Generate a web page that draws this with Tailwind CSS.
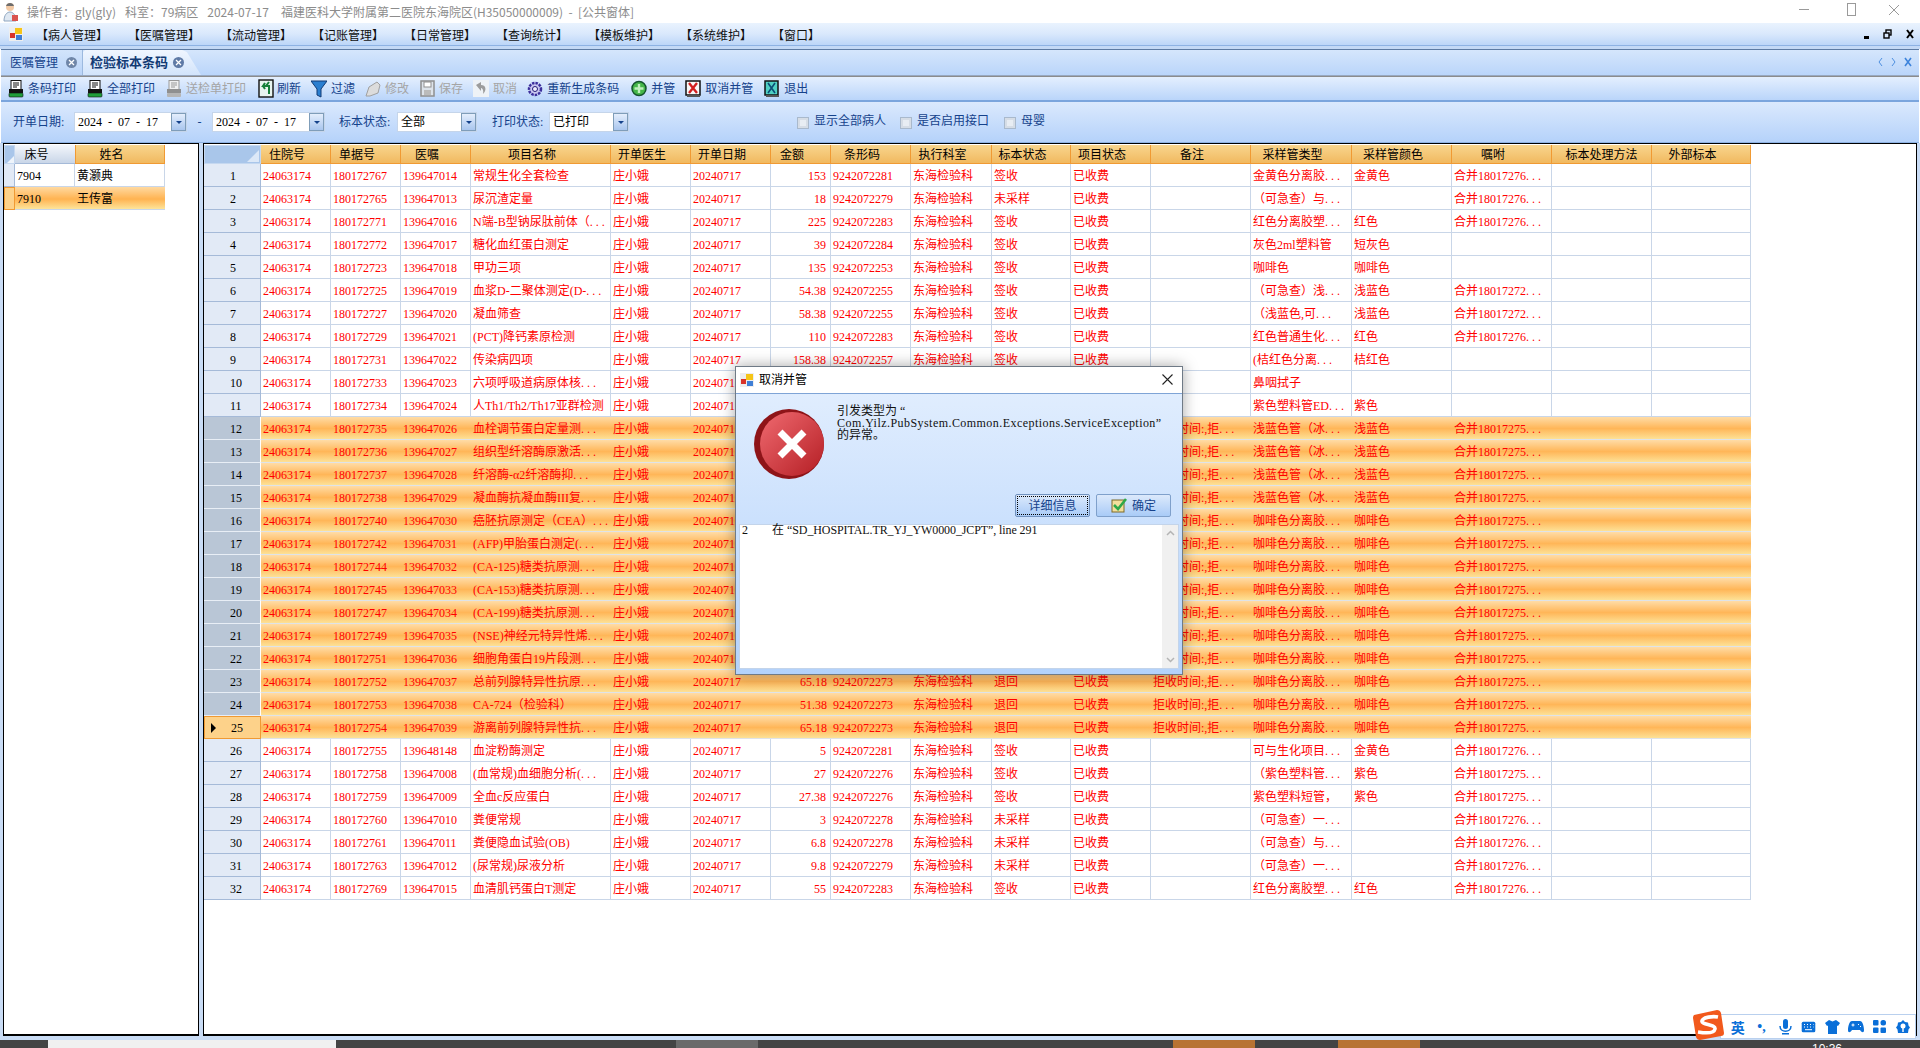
<!DOCTYPE html>
<html lang="zh-CN">
<head>
  <meta charset="UTF-8">
  <title>检验标本条码</title>
  <script src="https://cdn.jsdelivr.net/npm/@tailwindcss/browser@4"></script>
</head>
<body class="w-[1920px] h-[1048px] overflow-hidden relative bg-white text-[12px] leading-[16px] text-black font-['Liberation_Serif','Noto_Sans_CJK_SC',serif]">

  <!-- window title -->
  <div class="h-[23px] flex items-center bg-white relative">
    <svg class="w-[20px] h-[20px] ml-[1px]" viewBox="0 0 20 20"><circle cx="9" cy="5" r="4" fill="#f2c9a5"/><path d="M5 4c1-4 7-4 8 0z" fill="#6d6d6d"/><path d="M3 19c0-6 3-9 6-9s6 3 6 9z" fill="#dfe8f2" stroke="#8fa6c0"/><rect x="11" y="13" width="6" height="6" fill="#d9534f"/></svg>
    <div class="ml-[6px] flex gap-[9px] text-[12px] text-[#8c8c8c] whitespace-pre font-['Noto_Sans_CJK_SC',sans-serif]">
      <span>操作者：gly(gly)</span>
      <span>科室：79病区</span>
      <span>2024-07-17</span>
      <span class="ml-[3px]">福建医科大学附属第二医院东海院区(H35050000009)  -  [公共窗体]</span>
    </div>
    <div class="absolute right-[20px] top-[3px] flex items-center gap-[32px] text-[#9a9a9a]">
      <div class="w-[10px] h-px bg-[#9a9a9a] mr-[6px]"></div>
      <div class="w-[9px] h-[13px] border border-[#9a9a9a]"></div>
      <svg class="w-[12px] h-[12px]" viewBox="0 0 12 12" fill="none" stroke="#9a9a9a"><path d="M1 1l10 10M11 1L1 11"/></svg>
    </div>
  </div>

  <!-- menu bar -->
  <div class="h-[23px] flex items-center bg-gradient-to-b from-[#eaf3fe] via-[#d9e8fc] to-[#bcd6f8] border-b border-[#8db2e3] relative">
    <svg class="w-[14px] h-[14px] ml-[9px]" viewBox="0 0 14 14"><rect width="14" height="14" fill="#eee"/><rect x="6" y="1" width="7" height="6" fill="#f5c518"/><rect x="1" y="6" width="5" height="5" fill="#d9332a"/><rect x="7" y="8" width="6" height="5" fill="#3f7fd6"/></svg>
    <div class="flex ml-[13px] pt-[3px] gap-[32px] text-[#101010]">
      <span class="w-[60px] whitespace-nowrap">【病人管理】</span>
      <span class="w-[60px] whitespace-nowrap">【医嘱管理】</span>
      <span class="w-[60px] whitespace-nowrap">【流动管理】</span>
      <span class="w-[60px] whitespace-nowrap">【记账管理】</span>
      <span class="w-[60px] whitespace-nowrap">【日常管理】</span>
      <span class="w-[60px] whitespace-nowrap">【查询统计】</span>
      <span class="w-[60px] whitespace-nowrap">【模板维护】</span>
      <span class="w-[60px] whitespace-nowrap">【系统维护】</span>
      <span class="w-[60px] whitespace-nowrap">【窗口】</span>
    </div>
    <div class="absolute right-[6px] top-[6px] flex items-center gap-[14px]">
      <div class="w-[5px] h-[3px] bg-black mt-[7px]"></div>
      <svg class="w-[9px] h-[10px]" viewBox="0 0 9 10" fill="none" stroke="#000" stroke-width="1.4"><rect x="3" y="1" width="5" height="5"/><rect x="1" y="4" width="5" height="5" fill="#d9e8fc"/></svg>
      <svg class="w-[8px] h-[10px]" viewBox="0 0 8 10" fill="none" stroke="#000" stroke-width="2"><path d="M1 1l6 8M7 1L1 9"/></svg>
    </div>
  </div>

  <div class="h-[3px] bg-[#c3d9f6]"></div>

  <!-- tabs -->
  <div class="h-[27px] mx-[1px] relative flex items-end bg-gradient-to-b from-[#d5e6fc] to-[#bad5fa] border-t border-[#5d7ba3] border-b-[#98a8c0] border-b">
    <div class="h-[25px] w-[80px] ml-[2px] relative flex items-center pl-[7px] text-[#15428b] bg-gradient-to-b from-[#d2e4fb] to-[#bad4f8] border-r border-[#9cb9df]">
      <span class="whitespace-nowrap">医嘱管理</span>
      <span class="absolute left-[63px] top-[7px] w-[11px] h-[11px] rounded-full bg-[#6f86a8] flex items-center justify-center"><svg class="w-[7px] h-[7px]" viewBox="0 0 7 7" stroke="#fff" stroke-width="1.3"><path d="M1 1l5 5M6 1L1 6"/></svg></span>
    </div>
    <div class="h-[25px] w-[118px] relative flex items-center pl-[7px] text-[13px] text-[#123a74] font-bold bg-gradient-to-b from-[#f0f6ff] to-[#d2e4fb] [clip-path:polygon(0_100%,0_8%,2%_0,84%_0,88%_8%,100%_100%)]">
      <span class="whitespace-nowrap">检验标本条码</span>
      <span class="absolute left-[90px] top-[7px] w-[11px] h-[11px] rounded-full bg-[#5f7aa6] flex items-center justify-center"><svg class="w-[7px] h-[7px]" viewBox="0 0 7 7" stroke="#fff" stroke-width="1.3"><path d="M1 1l5 5M6 1L1 6"/></svg></span>
    </div>
    <div class="absolute right-[7px] top-[7px] flex items-center gap-[8px]">
      <svg class="w-[5px] h-[10px]" viewBox="0 0 5 10" fill="none" stroke="#4d8fe0"><path d="M4 1L1 5l3 4"/></svg>
      <svg class="w-[5px] h-[10px]" viewBox="0 0 5 10" fill="none" stroke="#4d8fe0"><path d="M1 1l3 4-3 4"/></svg>
      <svg class="w-[8px] h-[10px]" viewBox="0 0 8 10" fill="none" stroke="#3d84dc" stroke-width="1.6"><path d="M1 1l6 8M7 1L1 9"/></svg>
    </div>
  </div>

  <!-- toolbar -->
  <div class="h-[26px] mx-[1px] pl-[7px] flex items-center gap-[10px] bg-gradient-to-b from-[#e4effe] to-[#bad5fa] border-t border-[#8c8c8c] border-b-2 border-b-[#7ba5dd] text-[#15428b]">
    <div class="flex items-center gap-[4px]"><svg class="w-[16px] h-[18px]" viewBox="0 0 16 18"><rect x="3" y="0.500" width="10" height="9" fill="#fff" stroke="#111"/><path d="M5 3h6M5 5h6M5 7h4" stroke="#111"/><rect x="1" y="9" width="14" height="4" fill="#111"/><rect x="1" y="13" width="14" height="4" rx="1" fill="#1f9d3a" stroke="#111" stroke-width=".6"/></svg><span>条码打印</span></div>
    <div class="flex items-center gap-[4px] ml-px"><svg class="w-[16px] h-[18px]" viewBox="0 0 16 18"><rect x="3" y="0.500" width="10" height="9" fill="#fff" stroke="#111"/><path d="M5 3h6M5 5h6M5 7h4" stroke="#111"/><rect x="1" y="9" width="14" height="4" fill="#111"/><rect x="1" y="13" width="14" height="4" rx="1" fill="#1f9d3a" stroke="#111" stroke-width=".6"/></svg><span>全部打印</span></div>
    <div class="flex items-center gap-[4px] ml-px text-[#a5a5a5]"><svg class="w-[16px] h-[18px]" viewBox="0 0 16 18"><rect x="3" y="0.500" width="10" height="9" fill="#f0f0f0" stroke="#999"/><path d="M5 3h6M5 5h6M5 7h4" stroke="#999"/><rect x="1" y="9" width="14" height="4" fill="#8f8f8f"/><rect x="1" y="13" width="14" height="4" rx="1" fill="#b5b5b5"/></svg><span>送检单打印</span></div>
    <div class="flex items-center gap-[3px] ml-[2px]"><svg class="w-[16px] h-[20px]" viewBox="0 0 16 20"><rect x="1" y="1" width="14" height="17" fill="#e8f4f0" stroke="#111" stroke-width="1.4"/><path d="M11 15V7H8l3-4M11 7H5l2-3M5 7l2 3" fill="none" stroke="#16803a" stroke-width="2"/></svg><span>刷新</span></div>
    <div class="flex items-center gap-[4px]"><svg class="w-[16px] h-[18px]" viewBox="0 0 16 18"><path d="M0 1h16L10 9v8l-4-2V9z" fill="#2b7fd0" stroke="#123a74"/></svg><span>过滤</span></div>
    <div class="flex items-center gap-[4px] text-[#a5a5a5]"><svg class="w-[16px] h-[16px]" viewBox="0 0 16 16"><path d="M1 15l3-9 8-5 3 3-2 8-8 3z" fill="#dcdcdc" stroke="#a0a0a0"/></svg><span>修改</span></div>
    <div class="flex items-center gap-[4px] ml-px text-[#a5a5a5]"><svg class="w-[15px] h-[17px]" viewBox="0 0 15 17"><rect x="1" y="1" width="13" height="15" fill="#dde3ea" stroke="#8f8f8f" stroke-width="1.5"/><rect x="4" y="2" width="7" height="5" fill="#fff" stroke="#8f8f8f"/><rect x="4" y="10" width="7" height="5" fill="#bbb"/></svg><span>保存</span></div>
    <div class="flex items-center gap-[4px] text-[#a5a5a5]"><svg class="w-[16px] h-[17px]" viewBox="0 0 16 17"><rect width="16" height="17" fill="#eef2f6"/><path d="M3 5l5-3v3c5 0 6 5 2 9 1-4-1-6-2-6v3z" fill="#9c9c9c"/></svg><span>取消</span></div>
    <div class="flex items-center gap-[4px]"><svg class="w-[16px] h-[16px]" viewBox="0 0 16 16"><circle cx="8" cy="8" r="6" fill="#c9c7f0" stroke="#3c2f9c" stroke-width="2.5" stroke-dasharray="2.5 1"/><circle cx="8" cy="8" r="2.5" fill="#f0f0ff" stroke="#241a78"/></svg><span>重新生成条码</span></div>
    <div class="flex items-center gap-[4px] ml-[2px]"><svg class="w-[16px] h-[17px]" viewBox="0 0 16 17"><circle cx="8" cy="8.5" r="7" fill="#45b649" stroke="#14532d" stroke-width="1.5"/><path d="M8 4v9M3.5 8.5h9" stroke="#bff0bd" stroke-width="2.4"/></svg><span>并管</span></div>
    <div class="flex items-center gap-[4px]"><svg class="w-[16px] h-[17px]" viewBox="0 0 16 17"><rect x="1" y="1" width="14" height="14" fill="#f8f8f8" stroke="#111" stroke-width="1.5"/><path d="M4 3l8 10M12 3L4 13" stroke="#d21f1f" stroke-width="2.4"/><rect x="2" y="15" width="13" height="2" fill="#555"/></svg><span>取消并管</span></div>
    <div class="flex items-center gap-[4px] ml-px"><svg class="w-[16px] h-[17px]" viewBox="0 0 16 17"><rect x="1" y="1" width="13" height="14" fill="#4fd0c4" stroke="#111" stroke-width="1.5"/><path d="M4 3l7 10M11 3L4 13" stroke="#0b4e76" stroke-width="1.6"/><rect x="2" y="15" width="13" height="2" fill="#555"/></svg><span>退出</span></div>
  </div>

  <!-- filter panel -->
  <div class="h-[41px] mx-[1px] relative flex items-center pl-[12px] text-[#15428b] bg-gradient-to-b from-[#dbe9fd] to-[#b5d2fa] border-b border-[#8db2e3]">
    <span class="w-[61px] whitespace-nowrap">开单日期:</span>
    <div class="w-[113px] h-[20px] flex items-center justify-between bg-white border border-[#c5d5ea] pl-[3px] text-black whitespace-pre"><span>2024  -  07  -  17</span><span class="w-[15px] h-[18px] bg-gradient-to-b from-[#e4eefc] to-[#a9c6ee] border border-[#7f9db9] flex items-center justify-center"><span class="w-0 h-0 border-x-[3px] border-x-transparent border-t-[3px] border-t-[#15428b]"></span></span></div>
    <span class="w-[25px] text-center">-</span>
    <div class="w-[113px] h-[20px] flex items-center justify-between bg-white border border-[#c5d5ea] pl-[3px] text-black whitespace-pre"><span>2024  -  07  -  17</span><span class="w-[15px] h-[18px] bg-gradient-to-b from-[#e4eefc] to-[#a9c6ee] border border-[#7f9db9] flex items-center justify-center"><span class="w-0 h-0 border-x-[3px] border-x-transparent border-t-[3px] border-t-[#15428b]"></span></span></div>
    <span class="ml-[14px] w-[58px] whitespace-nowrap">标本状态:</span>
    <div class="w-[80px] h-[20px] flex items-center justify-between bg-white border border-[#c5d5ea] pl-[3px] text-black"><span>全部</span><span class="w-[15px] h-[18px] bg-gradient-to-b from-[#e4eefc] to-[#a9c6ee] border border-[#7f9db9] flex items-center justify-center"><span class="w-0 h-0 border-x-[3px] border-x-transparent border-t-[3px] border-t-[#15428b]"></span></span></div>
    <span class="ml-[15px] w-[57px] whitespace-nowrap">打印状态:</span>
    <div class="w-[80px] h-[20px] flex items-center justify-between bg-white border border-[#c5d5ea] pl-[3px] text-black"><span>已打印</span><span class="w-[15px] h-[18px] bg-gradient-to-b from-[#e4eefc] to-[#a9c6ee] border border-[#7f9db9] flex items-center justify-center"><span class="w-0 h-0 border-x-[3px] border-x-transparent border-t-[3px] border-t-[#15428b]"></span></span></div>
    <div class="ml-[168px] flex items-center gap-[5px] -mt-[3px]"><span class="w-[12px] h-[12px] mt-[4px] bg-[#e8edf3] border border-[#a9b9cc] shadow-[inset_0_0_0_2px_#d6dde6]"></span><span class="whitespace-nowrap">显示全部病人</span></div>
    <div class="ml-[14px] flex items-center gap-[5px] -mt-[3px]"><span class="w-[12px] h-[12px] mt-[4px] bg-[#e8edf3] border border-[#a9b9cc] shadow-[inset_0_0_0_2px_#d6dde6]"></span><span class="whitespace-nowrap">是否启用接口</span></div>
    <div class="ml-[15px] flex items-center gap-[5px] -mt-[3px]"><span class="w-[12px] h-[12px] mt-[4px] bg-[#e8edf3] border border-[#a9b9cc] shadow-[inset_0_0_0_2px_#d6dde6]"></span><span class="whitespace-nowrap">母婴</span></div>
  </div>

  <!-- grids -->
  <div class="h-[893px] flex gap-[4px] pl-[3px] pr-[3px] pb-0 bg-[#c9dcf5]">
    <div class="w-[196px] border border-black border-b-2 bg-white pt-px">
      <div class="flex h-[19px]">
        <div class="w-[11px] bg-[#a9c6ea] border border-[#c5d8f0] relative"><span class="absolute right-0 bottom-0 w-0 h-0 border-l-[7px] border-l-transparent border-b-[7px] border-b-white/80"></span></div>
        <div class="w-[60px] flex items-center justify-center pt-px pr-[17px] bg-gradient-to-b from-[#f3f6fb] to-[#c9d6e8] border-b border-[#a5bad8]">床号</div>
        <div class="w-[90px] flex items-center justify-center pt-px pr-[17px] bg-gradient-to-b from-[#f8d58d] to-[#f1b95f] border-x border-b border-[#f09a33]">姓名</div>
      </div>
      <div class="flex h-[23px]">
        <div class="w-[11px] bg-[#e2eaf6] border-b border-[#a5bad8] border-r border-r-[#a5bad8]"></div>
        <div class="w-[60px] flex items-center pl-[2px] pt-px border-r border-b border-[#c9d6e8]">7904</div>
        <div class="w-[90px] flex items-center pl-[2px] pt-px border-r border-b border-[#c9d6e8]">黄灏典</div>
      </div>
      <div class="flex h-[23px]">
        <div class="w-[11px] bg-[#fdd28a] border border-[#f09a33]"></div>
        <div class="w-[150px] flex items-center pt-px bg-[linear-gradient(#ffd9a0,#ffb351_55%,#fde49a)] border-b border-[#c9d6e8]"><span class="w-[60px] pl-[2px]">7910</span><span class="pl-[2px]">王传富</span></div>
      </div>
    </div>
    <div class="flex-1 border border-black border-b-2 bg-white pt-px">
      <div id="grid"></div>
    </div>
  </div>
  <div class="h-[4px] bg-[#c9dcf5]"></div>

  <!-- taskbar, only its top edge is on screen -->
  <div class="h-[8px] relative overflow-hidden bg-[#444444]">
    <div class="absolute left-[48px] top-0 w-[288px] h-full bg-[#f0f0f0]"></div>
    <div class="absolute left-[676px] top-0 w-[82px] h-full bg-[#6a6a6a]"></div>
    <div class="absolute left-[1173px] top-0 w-[82px] h-full bg-[#b87333]"></div>
    <div class="absolute left-[1338px] top-0 w-[82px] h-full bg-[#b87333]"></div>
    <span class="absolute left-[1812px] top-px text-[12px] text-white font-['Liberation_Sans',sans-serif]">10:36</span>
  </div>

  <!-- error dialog -->
  <div class="absolute left-[735px] top-[366px] w-[448px] h-[309px] bg-white border border-[#6f7a86] shadow-[0_0_14px_rgba(0,0,0,0.35)] flex flex-col">
    <div class="h-[26px] flex items-center relative">
      <svg class="w-[14px] h-[14px] ml-[4px]" viewBox="0 0 14 14"><rect width="14" height="14" fill="#eee"/><rect x="6" y="1" width="7" height="6" fill="#f5c518"/><rect x="1" y="6" width="5" height="5" fill="#d9332a"/><rect x="7" y="8" width="6" height="5" fill="#3f7fd6"/></svg>
      <span class="ml-[5px] text-black">取消并管</span>
      <svg class="absolute right-[9px] top-[7px] w-[11px] h-[11px]" viewBox="0 0 11 11" fill="none" stroke="#222" stroke-width="1.1"><path d="M.5.5l10 10M10.5.5l-10 10"/></svg>
    </div>
    <div class="flex-1 relative border-t border-[#7fa4d6] bg-gradient-to-b from-[#e0edfe] to-[#b3d2fb] px-[3px]">
      <div class="flex h-[100px]">
        <svg class="w-[72px] h-[74px] ml-[15px] mt-[13px] shrink-0" viewBox="0 0 72 74">
          <defs>
            <linearGradient id="errA" x1="0" y1="0" x2="1" y2="1"><stop offset="0" stop-color="#f06a70"/><stop offset="1" stop-color="#b41e24"/></linearGradient>
          </defs>
          <circle cx="35" cy="37" r="35" fill="#8e1418"/>
          <circle cx="38" cy="37" r="32" fill="url(#errA)"/>
          <path d="M26 25l24 24M50 25L26 49" stroke="#fff" stroke-width="7"/>
        </svg>
        <div class="ml-[11px] mt-[11px] w-[340px] leading-[12px] text-[#111]">引发类型为 “<br><span class="tracking-[0.45px] whitespace-nowrap">Com.Yilz.PubSystem.Common.Exceptions.ServiceException”</span><br>的异常。</div>
      </div>
      <div class="absolute right-[11px] top-[100px] flex gap-[6px]">
        <div class="w-[75px] h-[23px] flex items-center justify-center text-[#15428b] bg-gradient-to-b from-[#dce9fb] to-[#a9cbf7] border border-[#7191bd] rounded-[2px] outline-1 outline-dotted outline-black -outline-offset-3">详细信息</div>
        <div class="w-[75px] h-[23px] flex items-center justify-center gap-[5px] text-[#15428b] bg-gradient-to-b from-[#dce9fb] to-[#a9cbf7] border border-[#7fa0cb] rounded-[2px]"><svg class="w-[16px] h-[15px]" viewBox="0 0 16 15"><rect x="1" y="2" width="12" height="12" fill="#f3df9c" stroke="#7d6b28"/><path d="M3 7l4 4 8-10" fill="none" stroke="#2ea84a" stroke-width="2.6"/></svg><span>确定</span></div>
      </div>
      <div class="absolute left-[3px] top-[130px] w-[440px] h-[145px] flex bg-white border border-[#c3d4ea]">
        <div class="flex-1 pl-[2px] leading-[10px] whitespace-pre text-[#111]">2        在 <span class="tracking-[-0.1px]">“SD_HOSPITAL.TR_YJ_YW0000_JCPT”, line 291</span></div>
        <div class="w-[16px] bg-[#f0f0f0] flex flex-col justify-between items-center py-[5px]">
          <svg class="w-[9px] h-[6px]" viewBox="0 0 9 6" fill="none" stroke="#b4b4b4" stroke-width="1.5"><path d="M1 5l3.5-3.5L8 5"/></svg>
          <svg class="w-[9px] h-[6px]" viewBox="0 0 9 6" fill="none" stroke="#b4b4b4" stroke-width="1.5"><path d="M1 1l3.5 3.5L8 1"/></svg>
        </div>
      </div>
    </div>
  </div>

  <!-- input method bar -->
  <div class="absolute left-[1720px] top-[1014px] w-[196px] h-[25px] bg-white border border-[#b9d0ee] flex items-center pl-[5px] text-[#0a6fd8]">
    <div class="w-[24px] flex justify-center font-bold text-[14px] font-['Noto_Sans_CJK_SC',sans-serif]">英</div>
    <div class="w-[24px] flex justify-center text-[14px] font-bold leading-none">•,</div>
    <div class="w-[24px] flex justify-center"><svg class="w-[13px] h-[16px]" viewBox="0 0 13 16" fill="#0a6fd8"><rect x="4" y="0" width="5" height="10" rx="2.5"/><path d="M1 7c0 7 11 7 11 0" fill="none" stroke="#0a6fd8" stroke-width="1.5"/><rect x="3" y="14" width="7" height="1.5"/></svg></div>
    <div class="w-[24px] flex justify-center"><svg class="w-[15px] h-[12px]" viewBox="0 0 15 12"><rect x=".7" y=".7" width="13.6" height="10.6" rx="1.5" fill="#0a6fd8"/><path d="M3 3.500h1M6 3.500h1M9 3.500h1M12 3.500h.5M3 6h1M6 6h1M9 6h1M12 6h.5M4 8.700h7" stroke="#fff"/></svg></div>
    <div class="w-[24px] flex justify-center"><svg class="w-[15px] h-[14px]" viewBox="0 0 15 14" fill="#0a6fd8"><path d="M4 0l3.500 1.500L11 0l4 3-2 3-1-.5V14H3V5.500L2 6 0 3z"/></svg></div>
    <div class="w-[24px] flex justify-center"><svg class="w-[16px] h-[13px]" viewBox="0 0 16 13"><path d="M4 1h8c2.500 0 4 5 4 9 0 3-2 3-4 0H4c-2 3-4 3-4 0 0-4 1.500-9 4-9z" fill="#0a6fd8"/><path d="M3.500 5h3M5 3.500v3M10 4.500h1M12 6.500h1" stroke="#fff"/></svg></div>
    <div class="w-[24px] flex justify-center"><svg class="w-[13px] h-[13px]" viewBox="0 0 13 13" fill="#0a6fd8"><rect width="5.500" height="5.500" rx="1"/><rect x="7.500" width="5.500" height="5.500" rx="2.500"/><rect y="7.500" width="5.500" height="5.500" rx="1"/><rect x="7.500" y="7.500" width="5.500" height="5.500" rx="1"/></svg></div>
    <div class="w-[24px] flex justify-center"><svg class="w-[14px] h-[14px]" viewBox="0 0 14 14"><path d="M7 0l2 2 3 .5.500 3L14 7.500l-1.500 2L12 13H2l-.5-3.500L0 7.500l1.500-2 .5-3 3-.5z" fill="#0a6fd8"/><circle cx="7" cy="6" r="2.500" fill="#fff"/><path d="M7 6v6" stroke="#fff" stroke-width="1.4"/></svg></div>
  </div>
  <svg class="absolute left-[1692px] top-[1009px] w-[33px] h-[32px]" viewBox="0 0 33 32">
    <path d="M2 6L25 1q3 0 4 3l3 20q0 3-3 3L8 31q-3 0-4-3L1 9q0-2 1-3z" fill="#f2591c"/>
    <path d="M26 8c-5-1-15 0-16 4s14 3 13 8-11 4-17 3" fill="none" stroke="#fff" stroke-width="3.600"/>
  </svg>

  <script>
    // [单据号, 医嘱, 项目名称, 金额, 条形码, 标本状态, 备注, 采样管类型, 采样管颜色, 嘱咐]
    const H = '拒收时间:,拒...';
    const M5 = '合并18017275...', M6 = '合并18017276...', M2 = '合并18017272...';
    const LB = '浅蓝色管（冰...', KF = '咖啡色分离胶...';
    const rows = [
      ['180172767','139647014','常规生化全套检查','153','9242072281','签收','','金黄色分离胶...','金黄色',M6],
      ['180172765','139647013','尿沉渣定量','18','9242072279','未采样','','（可急查）与...','',M6],
      ['180172771','139647016','N端-B型钠尿肽前体（...','225','9242072283','签收','','红色分离胶塑...','红色',M6],
      ['180172772','139647017','糖化血红蛋白测定','39','9242072284','签收','','灰色2ml塑料管','短灰色',''],
      ['180172723','139647018','甲功三项','135','9242072253','签收','','咖啡色','咖啡色',''],
      ['180172725','139647019','血浆D-二聚体测定(D-...','54.38','9242072255','签收','','（可急查）浅...','浅蓝色',M2],
      ['180172727','139647020','凝血筛查','58.38','9242072255','签收','','（浅蓝色,可...','浅蓝色',M2],
      ['180172729','139647021','(PCT)降钙素原检测','110','9242072283','签收','','红色普通生化...','红色',M6],
      ['180172731','139647022','传染病四项','158.38','9242072257','签收','','(桔红色分离...','桔红色',''],
      ['180172733','139647023','六项呼吸道病原体核...','','','','','鼻咽拭子','',''],
      ['180172734','139647024','人Th1/Th2/Th17亚群检测','','','','','紫色塑料管ED...','紫色',''],
      ['180172735','139647026','血栓调节蛋白定量测...','','','',H,LB,'浅蓝色',M5],
      ['180172736','139647027','组织型纤溶酶原激活...','','','',H,LB,'浅蓝色',M5],
      ['180172737','139647028','纤溶酶-α2纤溶酶抑...','','','',H,LB,'浅蓝色',M5],
      ['180172738','139647029','凝血酶抗凝血酶III复...','','','',H,LB,'浅蓝色',M5],
      ['180172740','139647030','癌胚抗原测定（CEA）...','','','',H,KF,'咖啡色',M5],
      ['180172742','139647031','(AFP)甲胎蛋白测定(...','','','',H,KF,'咖啡色',M5],
      ['180172744','139647032','(CA-125)糖类抗原测...','','','',H,KF,'咖啡色',M5],
      ['180172745','139647033','(CA-153)糖类抗原测...','','','',H,KF,'咖啡色',M5],
      ['180172747','139647034','(CA-199)糖类抗原测...','','','',H,KF,'咖啡色',M5],
      ['180172749','139647035','(NSE)神经元特异性烯...','','','',H,KF,'咖啡色',M5],
      ['180172751','139647036','细胞角蛋白19片段测...','','','',H,KF,'咖啡色',M5],
      ['180172752','139647037','总前列腺特异性抗原...','65.18','9242072273','退回',H,KF,'咖啡色',M5],
      ['180172753','139647038','CA-724（检验科）','51.38','9242072273','退回',H,KF,'咖啡色',M5],
      ['180172754','139647039','游离前列腺特异性抗...','65.18','9242072273','退回',H,KF,'咖啡色',M5],
      ['180172755','139648148','血淀粉酶测定','5','9242072281','签收','','可与生化项目...','金黄色',M6],
      ['180172758','139647008','(血常规)血细胞分析(...','27','9242072276','签收','','（紫色塑料管...','紫色',M5],
      ['180172759','139647009','全血c反应蛋白','27.38','9242072276','签收','','紫色塑料短管，','紫色',M5],
      ['180172760','139647010','粪便常规','3','9242072278','未采样','','（可急查）一...','',M6],
      ['180172761','139647011','粪便隐血试验(OB)','6.8','9242072278','未采样','','（可急查）与...','',M6],
      ['180172763','139647012','(尿常规)尿液分析','9.8','9242072279','未采样','','（可急查）一...','',M6],
      ['180172769','139647015','血清肌钙蛋白T测定','55','9242072283','签收','','红色分离胶塑...','红色',M6]
    ];
    const heads = [['住院号',70],['单据号',70],['医嘱',70],['项目名称',140],['开单医生',80],['开单日期',80],['金额',60],['条形码',80],['执行科室',81],['标本状态',79],['项目状态',80],['备注',100],['采样管类型',101],['采样管颜色',100],['嘱咐',100],['标本处理方法',100],['外部标本',99]];

    // trailing dots are wider in the original bitmap font
    const dots = s => s.replace(/\.\.\.$/, '<span class="tracking-[3px]">...</span>');

    let html = '<div class="flex h-[19px] w-[1547px]"><div class="w-[57px] relative bg-[#a9c6ea] border border-[#c5d8f0]"><span class="absolute right-px bottom-px w-0 h-0 border-l-[12px] border-l-transparent border-b-[12px] border-b-white/60"></span></div>';
    heads.forEach(h => {
      const pad = h[0].length > 5 ? 'pr-0' : 'pr-[17px]';
      html += `<div class="flex items-center justify-center pt-px ${pad} bg-gradient-to-b from-[#f8d58d] to-[#f1b95f] border-r border-b border-[#f09a33]" style="width:${h[1]}px">${h[0]}</div>`;
    });
    html += '</div>';

    rows.forEach((r, i) => {
      const n = i + 1;
      const hot = n >= 12 && n <= 25;
      const cur = n === 25;
      const head = cur ? 'bg-[#fdd28a] border border-[#f09a33]' : hot ? 'bg-[#b9c6d6] border-b border-[#e8eef6] border-r border-r-white' : 'bg-[#e2eaf6] border-b border-[#a5bad8] border-r border-r-[#a5bad8]';
      const cell = hot ? 'border-b border-[#dfe3e8]' : 'border-r border-b border-[#c9d6e8]';
      const vals = ['24063174', r[0], r[1], dots(r[2]), '庄小娥', '20240717', r[3], r[4], r[4] ? '东海检验科' : '', r[5], r[4] ? '已收费' : '', dots(r[6]), dots(r[7]), r[8], dots(r[9]), '', ''];
      html += `<div class="flex h-[23px] w-[1547px] ${hot ? 'bg-[linear-gradient(#ffdca6,#ffb658_50%,#fde59c)]' : ''}"><div class="w-[57px] relative flex items-center pl-[26px] pt-px ${head}">${cur ? '<span class="absolute left-[6px] w-0 h-0 border-y-[5px] border-y-transparent border-l-[5px] border-l-black"></span>' : ''}${n}</div>`;
      vals.forEach((v, j) => {
        const align = j === 6 ? 'justify-end pr-[4px]' : 'pl-[2px]';
        html += `<div class="flex items-center pt-px whitespace-pre overflow-hidden text-[#ff0000] ${align} ${cell}" style="width:${heads[j][1]}px"><span>${v}</span></div>`;
      });
      html += '</div>';
    });
    document.getElementById('grid').innerHTML = html;
  </script>
</body>
</html>
